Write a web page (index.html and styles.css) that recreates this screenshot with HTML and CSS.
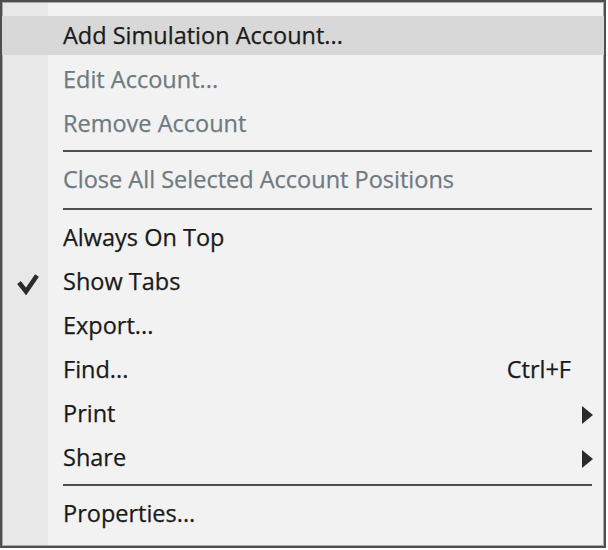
FILE: index.html
```html
<!DOCTYPE html>
<html>
<head>
<meta charset="utf-8">
<link rel="stylesheet" href="styles.css">
</head>
<body>
<div class="menu">
  <div class="item hl"><span class="check"></span><span class="label">Add Simulation Account...</span><span class="key"></span><span class="sub"></span></div>
  <div class="item off"><span class="check"></span><span class="label">Edit Account...</span><span class="key"></span><span class="sub"></span></div>
  <div class="item off"><span class="check"></span><span class="label">Remove Account</span><span class="key"></span><span class="sub"></span></div>
  <div class="sep"></div>
  <div class="item off"><span class="check"></span><span class="label">Close All Selected Account Positions</span><span class="key"></span><span class="sub"></span></div>
  <div class="sep sep-wide"></div>
  <div class="item"><span class="check"></span><span class="label">Always On Top</span><span class="key"></span><span class="sub"></span></div>
  <div class="item"><span class="check"><svg class="tick" width="24" height="22" viewBox="0 0 24 22"><path d="M3 9.5 L10 18.5 L21 2.5" fill="none" stroke="#2b2b2b" stroke-width="4.6" stroke-linejoin="miter"/></svg></span><span class="label">Show Tabs</span><span class="key"></span><span class="sub"></span></div>
  <div class="item"><span class="check"></span><span class="label">Export...</span><span class="key"></span><span class="sub"></span></div>
  <div class="item"><span class="check"></span><span class="label">Find...</span><span class="key">Ctrl+F</span><span class="sub"></span></div>
  <div class="item"><span class="check"></span><span class="label">Print</span><span class="key"></span><span class="sub"><svg class="arrow" width="11" height="18" viewBox="0 0 11 18"><polygon points="0,0 11,9 0,18" fill="#2b2b2b"/></svg></span></div>
  <div class="item"><span class="check"></span><span class="label">Share</span><span class="key"></span><span class="sub"><svg class="arrow" width="11" height="18" viewBox="0 0 11 18"><polygon points="0,0 11,9 0,18" fill="#2b2b2b"/></svg></span></div>
  <div class="sep"></div>
  <div class="item"><span class="check"></span><span class="label">Properties...</span><span class="key"></span><span class="sub"></span></div>
</div>
</body>
</html>
```

FILE: styles.css
```css
html, body {
  margin: 0;
  padding: 0;
  background: #ffffff;
}

.menu {
  box-sizing: border-box;
  width: 606px;
  height: 548px;
  border: 2px solid #4e4e4e;
  box-shadow: inset 0 0 0 1px #a8a8a8;
  background: linear-gradient(to right, #e8e8e8 46px, #f2f2f2 46px);
  padding: 14px 0 8px 0;
  display: flex;
  flex-direction: column;
  font-family: "Open Sans", "Noto Sans", sans-serif;
  font-size: 23.5px;
  letter-spacing: 0;
  color: #1a1a1a;
  -webkit-text-stroke: 0.25px currentColor;
}

.item {
  box-sizing: border-box;
  height: 44px;
  padding-bottom: 5px;
  background-clip: content-box;
  display: grid;
  grid-template-columns: 61px 1fr auto 33px;
  align-items: center;
}

.item.hl {
  background-color: #d8d8d8;
}

.item.off {
  color: #6e7a81;
}

.label {
  line-height: 39px;
  padding-bottom: 3px;
  white-space: nowrap;
}

.key {
  line-height: 39px;
  padding-bottom: 3px;
}

.check {
  display: flex;
  align-items: center;
  height: 39px;
}

.tick {
  margin-left: 14px;
  margin-top: 1px;
}

.sub {
  display: flex;
  align-items: center;
  height: 39px;
}

.arrow {
  margin-left: 11px;
}

.sep {
  box-sizing: border-box;
  height: 12px;
  padding-top: 2px;
  margin-left: 61px;
  margin-right: 12px;
}

.sep::before {
  content: "";
  display: block;
  height: 2px;
  background: #4e4e4e;
}

.sep-wide {
  height: 14px;
  padding-top: 4px;
}
```
